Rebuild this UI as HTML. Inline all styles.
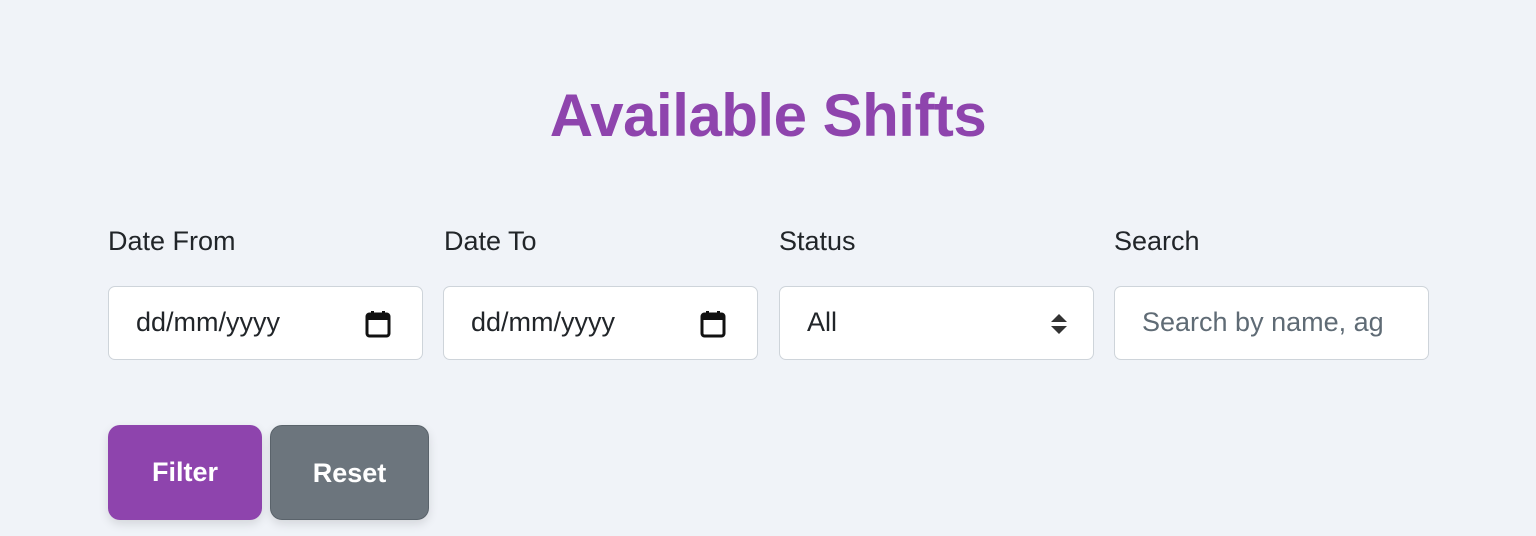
<!DOCTYPE html>
<html><head><style>
body{margin:0;width:1536px;height:536px;background:#f0f3f8;font-family:"Liberation Sans",sans-serif;position:relative;overflow:hidden}
h1{position:absolute;top:78px;left:0;width:1536px;margin:0;text-align:center;font-size:60px;font-weight:bold;color:#8e44ad;line-height:76px;letter-spacing:-0.5px}
.l{position:absolute;top:226px;font-size:27px;color:#212529}
.f{position:absolute;top:286px;width:312px;height:74px;background:#fff;border:1.5px solid #ced4da;border-radius:7px;box-sizing:border-box}
.t{position:absolute;left:27px;top:20px;font-size:27px;color:#212529}
.b{position:absolute;top:425px;height:95px;border-radius:12px;color:#fff;font-size:27px;font-weight:bold;text-align:center;line-height:95px;box-shadow:0 4px 10px rgba(0,0,0,.12)}
</style></head><body>
<h1>Available Shifts</h1>
<div class="l" style="left:108px">Date From</div>
<div class="l" style="left:444px">Date To</div>
<div class="l" style="left:779px">Status</div>
<div class="l" style="left:1114px">Search</div>
<div class="f" style="left:108px;width:315px"><span class="t">dd/mm/yyyy</span>
<svg style="position:absolute;left:256px;top:23px" width="26" height="28" viewBox="0 0 26 28"><rect x="2" y="4" width="22" height="22" rx="2.5" fill="none" stroke="#111" stroke-width="3"/><rect x="2" y="4" width="22" height="6" fill="#111"/><rect x="6" y="1" width="3" height="5" fill="#111"/><rect x="17" y="1" width="3" height="5" fill="#111"/></svg></div>
<div class="f" style="left:443px;width:315px"><span class="t">dd/mm/yyyy</span>
<svg style="position:absolute;left:256px;top:23px" width="26" height="28" viewBox="0 0 26 28"><rect x="2" y="4" width="22" height="22" rx="2.5" fill="none" stroke="#111" stroke-width="3"/><rect x="2" y="4" width="22" height="6" fill="#111"/><rect x="6" y="1" width="3" height="5" fill="#111"/><rect x="17" y="1" width="3" height="5" fill="#111"/></svg></div>
<div class="f" style="left:779px;width:315px"><span class="t">All</span>
<svg style="position:absolute;left:270px;top:25px" width="18" height="24" viewBox="0 0 18 24"><path d="M1 10L9 2L17 10Z M1 14L9 22L17 14Z" fill="#333"/></svg></div>
<div class="f" style="left:1114px;width:315px;overflow:hidden"><span class="t" style="color:#5f6b75;white-space:nowrap;width:262px;overflow:hidden;display:block">Search by name, ag</span></div>
<div class="b" style="left:108px;width:154px;background:#8e44ad">Filter</div>
<div class="b" style="left:270px;width:159px;background:#6c757d;border:1px solid #5a636b;box-sizing:border-box">Reset</div>
</body></html>
